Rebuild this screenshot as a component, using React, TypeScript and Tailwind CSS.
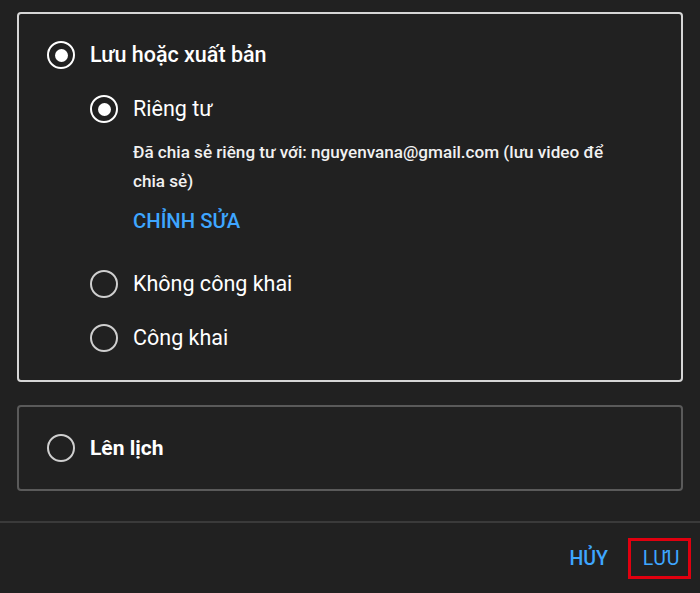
export default function App() {
  const font = { fontFamily: 'Roboto, "Noto Sans", sans-serif' };

  const Radio = ({ checked }: { checked?: boolean }) => (
    <span
      className={`flex h-[28px] w-[28px] shrink-0 items-center justify-center rounded-full border-[2.5px] ${
        checked ? 'border-white' : 'border-[#cfcfcf]'
      }`}
    >
      {checked && <span className="block h-[13px] w-[13px] rounded-full bg-white" />}
    </span>
  );

  return (
    <div className="h-[593px] w-[700px] overflow-hidden bg-[#212121] text-white" style={font}>
      <div className="px-[17px] pt-[12px]">
        {/* Lưu hoặc xuất bản */}
        <div className="h-[370px] rounded-[4px] border-2 border-[#d6d6d6] pl-[28px] pt-[27px]">
          <div className="flex h-[28px] items-center gap-[15px]">
            <Radio checked />
            <span className="text-[21.5px] font-medium leading-none">Lưu hoặc xuất bản</span>
          </div>

          <div className="ml-[43px]">
            <div className="mt-[26px] flex h-[28px] items-center gap-[15px]">
              <Radio checked />
              <span className="text-[21.5px] leading-none">Riêng tư</span>
            </div>
            <div className="ml-[43px] mt-[15px] w-[495px] text-[17.1px] font-medium leading-[29px] text-[#f1f1f1]">
              Đã chia sẻ riêng tư với: nguyenvana@gmail.com (lưu video để chia sẻ)
            </div>
            <div className="ml-[43px] mt-[13px] text-[20.3px] font-medium leading-[24px] text-[#3ea6ff]">CHỈNH SỬA</div>

            <div className="mt-[37px] flex h-[28px] items-center gap-[15px]">
              <Radio />
              <span className="text-[21.5px] leading-none">Không công khai</span>
            </div>
            <div className="mt-[26px] flex h-[28px] items-center gap-[15px]">
              <Radio />
              <span className="text-[21.5px] leading-none">Công khai</span>
            </div>
          </div>
        </div>

        {/* Lên lịch */}
        <div className="mt-[23px] flex h-[86px] items-center gap-[15px] rounded-[4px] border-2 border-[#5a5a5a] pl-[28px]">
          <Radio />
          <span className="text-[21px] font-bold leading-none">Lên lịch</span>
        </div>
      </div>

      <div className="mt-[30px] h-[2px] bg-[#3a3a3a]" />

      <div className="flex items-center justify-end gap-[20px] pr-[9px] pt-[15px]">
        <span className="text-[19.5px] font-medium text-[#3ea6ff]">HỦY</span>
        <span className="flex h-[41px] w-[63px] items-center justify-center border-[3px] border-[#e0000f] pl-[3px] text-[19.5px] text-[#3ea6ff]">
          LƯU
        </span>
      </div>
    </div>
  );
}
